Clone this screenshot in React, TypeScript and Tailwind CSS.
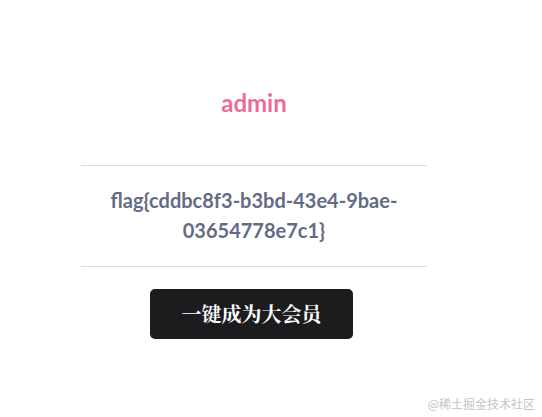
export default function App() {
  return (
    <div className="relative h-[417px] w-[542px] bg-white" style={{ fontFamily: 'Lato, "Noto Sans CJK SC", sans-serif' }}>
      <div className="flex w-[508px] flex-col items-center pt-[88px]">
        <h2 className="text-[24px] font-bold leading-[30px] text-[#ee6b98]">admin</h2>
        <div className="mt-[47px] w-[346px] border-t border-[#dddddd]" />
        <p className="mt-[19px] w-[346px] text-center text-[20px] font-bold leading-[30px] text-[#636c85]">
          flag{'{'}cddbc8f3-b3bd-43e4-9bae-03654778e7c1{'}'}
        </p>
        <div className="mt-[21px] w-[346px] border-t border-[#dddddd]" />
        <button className="mt-[22px] mr-[5px] flex h-[50px] w-[203px] items-center justify-center rounded-[5px] bg-[#1c1c1e] text-[20px] font-bold text-white" style={{ fontFamily: '"Noto Serif CJK SC", "Noto Sans CJK SC", serif' }}>
          一键成为大会员
        </button>
      </div>
      <span className="absolute right-[7px] bottom-[4px] text-[12px] text-[#c4c4c4]" style={{ fontFamily: '"Noto Sans CJK SC", sans-serif' }}>
        @稀土掘金技术社区
      </span>
    </div>
  );
}
